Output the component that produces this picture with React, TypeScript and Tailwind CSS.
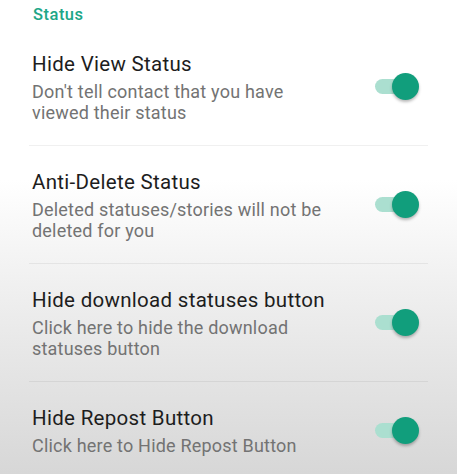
import React from 'react'

interface SettingRow {
  title: string
  summary: string
  enabled: boolean
}

const rows: SettingRow[] = [
  {
    title: 'Hide View Status',
    summary: "Don't tell contact that you have viewed their status",
    enabled: true
  },
  {
    title: 'Anti-Delete Status',
    summary: 'Deleted statuses/stories will not be deleted for you',
    enabled: true
  },
  {
    title: 'Hide download statuses button',
    summary: 'Click here to hide the download statuses button',
    enabled: true
  },
  {
    title: 'Hide Repost Button',
    summary: 'Click here to Hide Repost Button',
    enabled: true
  }
]

export default function App() {
  return (
    <div className="h-screen overflow-hidden bg-[linear-gradient(to_bottom,#ffffff_0%,#ffffff_38%,#f0f0f0_60%,#d7d7d7_100%)] font-['Roboto',sans-serif]">
      {/* Category header */}
      <div className="h-[28px] pl-[33px] pt-[5px] text-[16.5px] leading-[20px] font-medium tracking-[0.5px] text-[#20a687]">
        Status
      </div>

      {rows.map((row, index) => (
        <div key={index}>
          {index > 0 && <div className="mx-[29px] h-px bg-black/[0.06]" />}
          <PreferenceRow {...row} />
        </div>
      ))}
    </div>
  )
}

function PreferenceRow({ title, summary, enabled }: SettingRow) {
  return (
    <div className="flex items-center py-[22px] pl-[32px] pr-[38px]">
      <div className="w-[296px]">
        <div className="text-[20.5px] leading-[28px] tracking-[0.3px] text-[#1d1d1d]">{title}</div>
        <div className="mt-[3px] text-[18px] leading-[21px] tracking-[0.2px] text-[#737373]">{summary}</div>
      </div>
      <div className="ml-auto">
        <Switch checked={enabled} />
      </div>
    </div>
  )
}

function Switch({ checked }: { checked: boolean }) {
  return (
    <div className="relative h-[27px] w-[44px]">
      <div
        className={
          checked
            ? 'absolute left-0 top-[6px] h-[15px] w-[37px] rounded-full bg-[#abdfd0]'
            : 'absolute left-0 top-[6px] h-[15px] w-[37px] rounded-full bg-[#c4c4c4]'
        }
      />
      <div
        className={
          checked
            ? 'absolute right-0 top-0 h-[27px] w-[27px] rounded-full bg-[#119e7c] shadow-[0_2px_3px_rgba(0,0,0,0.28)]'
            : 'absolute left-0 top-0 h-[27px] w-[27px] rounded-full bg-[#f1f1f1] shadow-[0_2px_3px_rgba(0,0,0,0.28)]'
        }
      />
    </div>
  )
}
